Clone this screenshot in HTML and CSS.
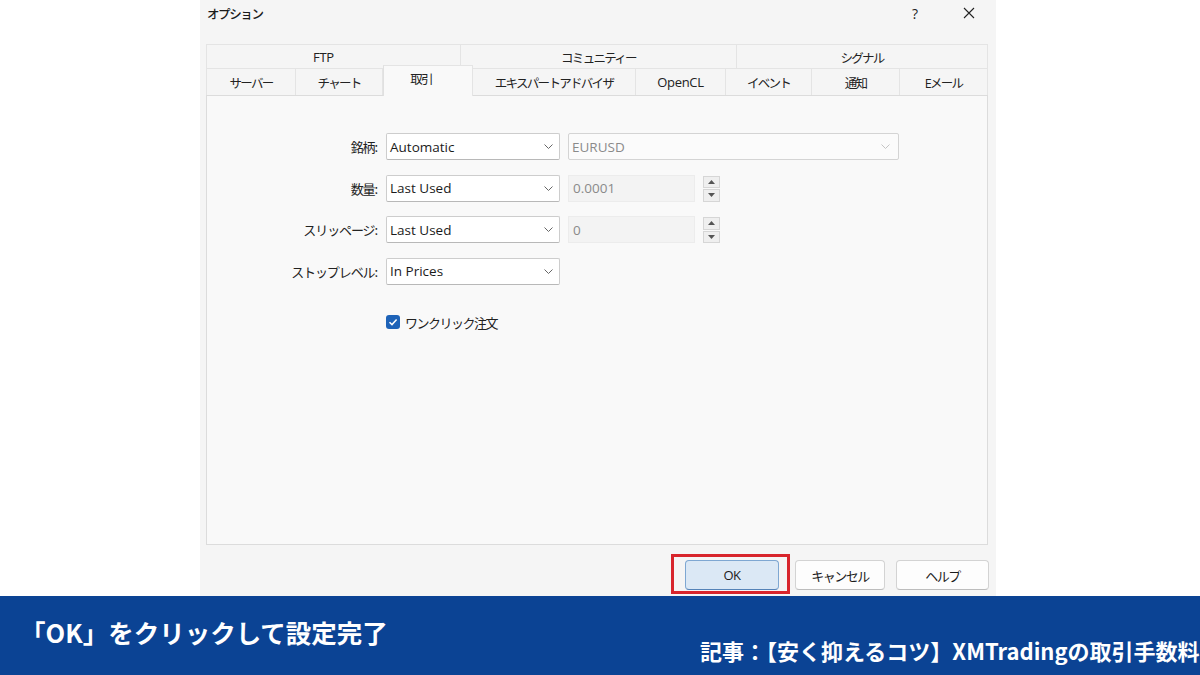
FILE: index.html
```html
<!DOCTYPE html>
<html lang="ja">
<head>
<meta charset="utf-8">
<title>オプション</title>
<link rel="stylesheet" href="styles.css">
</head>
<body>
<div class="page">
  <div class="dialog">
    <div class="titlebar">
      <span class="title">オプション</span>
      <span class="help-q">?</span>
      <svg class="close" width="12" height="12" viewBox="0 0 12 12"><path d="M1 1L11 11M11 1L1 11" stroke="#222" stroke-width="1.1" fill="none"/></svg>
    </div>
    <div class="tabs">
      <div class="tabrow row1">
        <div class="tab ftp">FTP</div>
        <div class="tab jp">コミュニティー</div>
        <div class="tab jp">シグナル</div>
      </div>
      <div class="tabrow row2">
        <div class="tab jp">サーバー</div>
        <div class="tab jp">チャート</div>
        <div class="tab jp active">取引</div>
        <div class="tab jp">エキスパートアドバイザ</div>
        <div class="tab">OpenCL</div>
        <div class="tab jp">イベント</div>
        <div class="tab jp">通知</div>
        <div class="tab jp">Eメール</div>
      </div>
    </div>
    <div class="panel">
      <div class="form">
        <label class="lbl">銘柄:</label>
        <div class="select"><span>Automatic</span><svg class="chev" width="9" height="5" viewBox="0 0 9 5"><path d="M0.5 0.5L4.5 4.5L8.5 0.5" stroke="#666" fill="none"/></svg></div>
        <div class="combo disabled"><span>EURUSD</span><svg class="chev" width="9" height="5" viewBox="0 0 9 5"><path d="M0.5 0.5L4.5 4.5L8.5 0.5" stroke="#c4c4c4" fill="none"/></svg></div>

        <label class="lbl">数量:</label>
        <div class="select"><span>Last Used</span><svg class="chev" width="9" height="5" viewBox="0 0 9 5"><path d="M0.5 0.5L4.5 4.5L8.5 0.5" stroke="#666" fill="none"/></svg></div>
        <div class="spinbox">
          <div class="spin-input">0.0001</div>
          <div class="spin-btns">
            <div class="spin-btn"><svg width="7" height="4" viewBox="0 0 7 4"><path d="M0 4L3.5 0L7 4Z" fill="#555"/></svg></div>
            <div class="spin-btn"><svg width="7" height="4" viewBox="0 0 7 4"><path d="M0 0L3.5 4L7 0Z" fill="#555"/></svg></div>
          </div>
        </div>

        <label class="lbl">スリッページ:</label>
        <div class="select"><span>Last Used</span><svg class="chev" width="9" height="5" viewBox="0 0 9 5"><path d="M0.5 0.5L4.5 4.5L8.5 0.5" stroke="#666" fill="none"/></svg></div>
        <div class="spinbox">
          <div class="spin-input">0</div>
          <div class="spin-btns">
            <div class="spin-btn"><svg width="7" height="4" viewBox="0 0 7 4"><path d="M0 4L3.5 0L7 4Z" fill="#555"/></svg></div>
            <div class="spin-btn"><svg width="7" height="4" viewBox="0 0 7 4"><path d="M0 0L3.5 4L7 0Z" fill="#555"/></svg></div>
          </div>
        </div>

        <label class="lbl">ストップレベル:</label>
        <div class="select"><span>In Prices</span><svg class="chev" width="9" height="5" viewBox="0 0 9 5"><path d="M0.5 0.5L4.5 4.5L8.5 0.5" stroke="#666" fill="none"/></svg></div>
        <div></div>
      </div>
      <div class="check-row">
        <span class="checkbox"><svg width="14" height="14" viewBox="0 0 14 14"><path d="M3.5 7.2L6 9.6L10.6 4.6" stroke="#fff" stroke-width="1.5" fill="none"/></svg></span>
        <span class="check-label">ワンクリック注文</span>
      </div>
    </div>
    <div class="buttons">
      <div class="highlight"><button class="btn primary">OK</button></div>
      <button class="btn cancel jp">キャンセル</button>
      <button class="btn help jp">ヘルプ</button>
    </div>
  </div>
  <div class="banner">
    <div class="banner-main">「OK」をクリックして設定完了</div>
    <div class="banner-sub">記事：【安く抑えるコツ】XMTradingの取引手数料</div>
  </div>
</div>
</body>
</html>
```

FILE: styles.css
```css
html, body {
  margin: 0;
  padding: 0;
}
body {
  width: 1200px;
  height: 675px;
  overflow: hidden;
  background: #ffffff;
  font-family: "Open Sans", "Noto Sans CJK JP", sans-serif;
  font-size: 13px;
  color: #1b1b1b;
}
.page {
  display: flex;
  flex-direction: column;
  height: 675px;
}
.dialog {
  margin-left: 200px;
  width: 796px;
  height: 596px;
  background: #f5f5f5;
  display: flex;
  flex-direction: column;
  flex: none;
}
.titlebar {
  height: 26px;
  display: flex;
  align-items: center;
  padding-left: 7px;
  padding-right: 21px;
}
.title {
  flex: 1;
  font-family: "Noto Sans CJK JP", sans-serif;
  font-size: 12.5px;
  font-weight: 500;
  letter-spacing: -1.4px;
}
.help-q {
  font-size: 14px;
  margin-right: 45px;
  color: #222;
}
.close {
  display: block;
}
.tabs {
  margin: 18px 8px 0 6px;
}
.tabrow {
  display: grid;
}
.row1 {
  grid-template-columns: 255px 276px 251px;
  height: 24px;
}
.row2 {
  grid-template-columns: 90px 87px 90px 163px 90px 86px 88px 88px;
  height: 27px;
}
.tab {
  display: flex;
  align-items: center;
  justify-content: center;
  border-top: 1px solid #e4e4e4;
  border-right: 1px solid #e4e4e4;
  font-family: "Open Sans", "Noto Sans CJK JP", sans-serif;
  font-size: 13px;
  color: #222;
  letter-spacing: -0.3px;
}
.tab.jp {
  font-size: 12.5px;
  letter-spacing: -1.7px;
}
.tab:first-child {
  border-left: 1px solid #e4e4e4;
}
.row1 .tab {
  padding-top: 1px;
}
.tab.ftp {
  padding-right: 20px;
}
.tab.active {
  background: #f9f9f9;
  margin-top: -3px;
  border-left: 1px solid #e0e0e0;
  padding-bottom: 6px;
  padding-right: 14px;
  position: relative;
  z-index: 1;
  margin-bottom: -1px;
}
.panel {
  height: 450px;
  box-sizing: border-box;
  border: 1px solid #dcdcdc;
  background: #f9f9f9;
  margin: 0 8px 0 6px;
  padding-top: 37px;
}
.form {
  display: grid;
  grid-template-columns: 171px 174px 331px;
  grid-auto-rows: 27px;
  column-gap: 8px;
  row-gap: 14.5px;
}
.lbl {
  display: flex;
  align-items: center;
  justify-content: flex-end;
  font-family: "Noto Sans CJK JP", sans-serif;
  font-size: 13px;
  color: #222;
  letter-spacing: -1.1px;
  padding-right: 1px;
}
.select, .combo {
  box-sizing: border-box;
  display: flex;
  align-items: center;
  justify-content: space-between;
  border: 1px solid #cdcdcd;
  border-bottom-color: #b8b8b8;
  border-radius: 2px;
  background: #ffffff;
  padding: 0 6px 0 3px;
}
.select span {
  font-size: 13.5px;
  color: #1b1b1b;
}
.combo.disabled {
  background: #fbfbfb;
  border-color: #d4d4d4;
  padding-right: 8px;
}
.combo.disabled span {
  color: #8a8a8a;
  font-size: 13.5px;
}
.chev {
  display: block;
}
.spinbox {
  display: flex;
  gap: 8px;
}
.spin-input {
  box-sizing: border-box;
  width: 127px;
  display: flex;
  align-items: center;
  padding-left: 4px;
  background: #f3f3f3;
  border: 1px solid #ececec;
  color: #8a8a8a;
  font-size: 13.5px;
}
.spin-btns {
  width: 17px;
  display: flex;
  flex-direction: column;
  gap: 1px;
  padding-top: 1px;
}
.spin-btn {
  flex: 1;
  box-sizing: border-box;
  display: flex;
  align-items: center;
  justify-content: center;
  background: #efefef;
  border: 1px solid #d6d6d6;
}
.spin-btn svg {
  display: block;
}
.check-row {
  display: flex;
  align-items: center;
  gap: 5px;
  margin-left: 179px;
  margin-top: 28px;
}
.checkbox {
  width: 14px;
  height: 14px;
  border-radius: 3px;
  background: #1e63b8;
  display: block;
}
.checkbox svg {
  display: block;
}
.check-label {
  font-family: "Noto Sans CJK JP", sans-serif;
  font-size: 13px;
  color: #222;
  letter-spacing: -1.5px;
}
.buttons {
  flex: 1;
  display: flex;
  justify-content: flex-end;
  align-items: flex-start;
  padding: 9px 7px 0 0;
}
.highlight {
  border: 3px solid #d8252c;
  padding: 3px 8px 1px 11px;
  margin-right: 5px;
}
.btn {
  height: 30px;
  box-sizing: border-box;
  border: 1px solid #d3d3d3;
  border-bottom-color: #bdbdbd;
  border-radius: 4px;
  background: #fdfdfd;
  font-family: "Open Sans", "Noto Sans CJK JP", sans-serif;
  font-size: 13px;
  color: #1b1b1b;
  padding: 0;
  margin-top: 6px;
  letter-spacing: -0.5px;
}
.btn.jp {
  letter-spacing: -1.5px;
}
.highlight .btn {
  margin-top: 0;
  display: block;
}
.btn.primary {
  width: 94px;
  background: #dbe8f5;
  border-color: #7ea7d2;
  border-bottom-color: #5583b8;
}
.btn.cancel {
  width: 90px;
  margin-right: 11px;
}
.btn.help {
  width: 93px;
}
.banner {
  flex: 1;
  background: #0b4394;
  color: #ffffff;
  font-family: "Noto Sans CJK JP", sans-serif;
  font-weight: 700;
  padding: 21px 0 0 20px;
  overflow: hidden;
  white-space: nowrap;
}
.banner-main {
  font-size: 25.5px;
  line-height: 30px;
}
.banner-sub {
  font-size: 22px;
  line-height: 26px;
  margin-left: 680px;
  margin-top: -10px;
}
```
